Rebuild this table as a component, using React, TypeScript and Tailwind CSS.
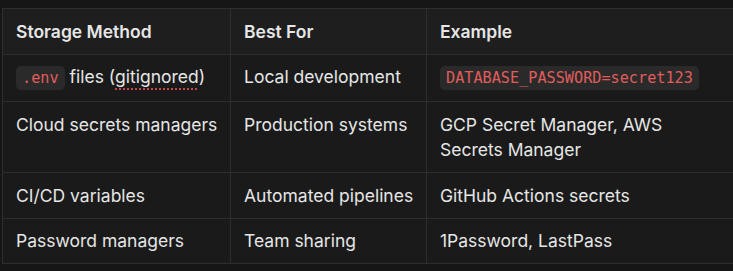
import React from 'react';

type Cell = React.ReactNode;

function Code({ children }: { children: React.ReactNode }) {
  return (
    <code className="rounded-[5px] bg-[#2a2a2a] px-[6px] py-[3px] font-['DejaVu_Sans_Mono',monospace] text-[15.2px] text-[#e05d5d]">
      {children}
    </code>
  );
}

const rows: Cell[][] = [
  [
    <>
      <Code>.env</Code> files (
      <span className="underline decoration-dotted decoration-[#c44848] decoration-2 underline-offset-[5px]">gitignored</span>)
    </>,
    'Local development',
    <Code>DATABASE_PASSWORD=secret123</Code>,
  ],
  ['Cloud secrets managers', 'Production systems', 'GCP Secret Manager, AWS Secrets Manager'],
  ['CI/CD variables', 'Automated pipelines', 'GitHub Actions secrets'],
  ['Password managers', 'Team sharing', '1Password, LastPass'],
];

const pad = ['pl-[13px] pr-[4px]', 'pl-[13px] pr-[4px]', 'pl-[13px] pr-[30px]'];

export default function App() {
  return (
    <div className="h-[271px] w-[733px] overflow-hidden bg-[#161616] pl-[2px] pt-[8px] font-['Inter',sans-serif] text-[17.5px] leading-[25.5px] text-[#e6e6e6]">
      <table className="w-[746px] table-fixed border-collapse">
        <colgroup>
          <col className="w-[228px]" />
          <col className="w-[196px]" />
          <col />
        </colgroup>
        <thead>
          <tr className="bg-[#1e1e1e]">
            {['Storage Method', 'Best For', 'Example'].map((h, j) => (
              <th key={h} className={`border border-[#2e2e2e] py-[9.5px] text-left font-semibold ${pad[j]}`}>
                {h}
              </th>
            ))}
          </tr>
        </thead>
        <tbody>
          {rows.map((r, i) => (
            <tr key={i} className="bg-[#1a1a1a]">
              {r.map((c, j) => (
                <td key={j} className={`border border-[#2e2e2e] py-[9.5px] align-top ${pad[j]}`}>
                  {c}
                </td>
              ))}
            </tr>
          ))}
        </tbody>
      </table>
    </div>
  );
}
